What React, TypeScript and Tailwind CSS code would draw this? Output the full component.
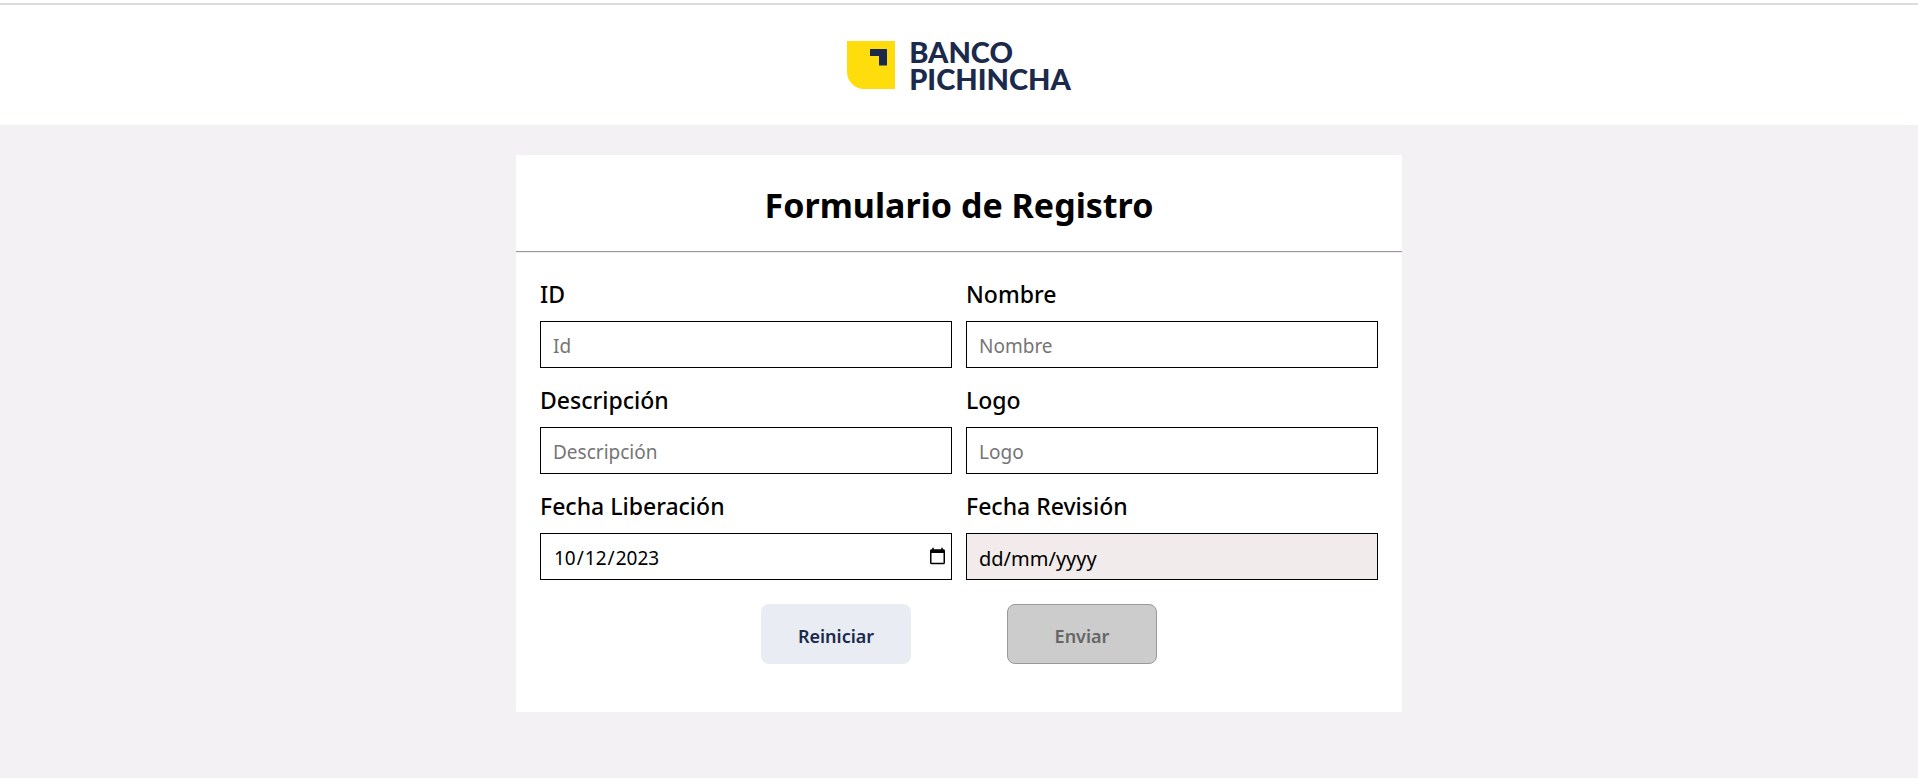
import { useState } from 'react';
import type { InputHTMLAttributes } from 'react';

type FieldProps = InputHTMLAttributes<HTMLInputElement> & { id: string; label: string };

const inputBase =
  'h-[47px] w-full rounded-none border border-black px-3 pt-[2px] text-[19px] text-black outline-none placeholder:text-[#757575]';

function Field({ id, label, className, ...rest }: FieldProps) {
  return (
    <div className="flex flex-col gap-[14px]">
      <label htmlFor={id} className="text-[23px] leading-[26px] font-medium">
        {label}
      </label>
      <input id={id} name={id} className={className ?? inputBase} {...rest} />
    </div>
  );
}

function BankLogo() {
  return (
    <div className="flex items-center gap-[14px] text-[#1b2a4b]">
      <svg viewBox="0 0 48 48" className="size-12" aria-hidden="true">
        <path d="M0 0H48V48H17A17 17 0 0 1 0 31Z" fill="#ffdd0c" />
        <path d="M23 8H40V24.500H32V15H23Z" fill="#1b2a4b" />
      </svg>
      <div className="font-['Lato'] text-[29px] leading-[27px] font-black">
        <div>BANCO</div>
        <div>PICHINCHA</div>
      </div>
    </div>
  );
}

export default function App() {
  const [release, setRelease] = useState('2023-10-12');

  return (
    <div className="min-h-screen bg-[#f3f1f3] font-['Noto_Sans',sans-serif] text-black">
      <div className="bg-white pt-[3px]">
        <header className="flex h-[122px] items-center justify-center border-t-2 border-[#dcdcdc]">
          <BankLogo />
        </header>
      </div>

      <main className="mx-auto mt-[30px] w-full max-w-[886px] bg-white pb-12">
        <h1 className="flex h-24 items-center justify-center pt-1 text-[34px] leading-none font-bold">
          Formulario de Registro
        </h1>
        <hr className="border-t border-b border-t-[#9a9a9a] border-b-[#eeeeee]" />

        <form className="px-6 pt-7" onSubmit={(e) => e.preventDefault()}>
          <div className="grid grid-cols-2 gap-x-[14px] gap-y-[19px]">
            <Field id="id" label="ID" placeholder="Id" />
            <Field id="nombre" label="Nombre" placeholder="Nombre" />
            <Field id="descripcion" label="Descripción" placeholder="Descripción" />
            <Field id="logo" label="Logo" placeholder="Logo" />
            <Field
              id="liberacion"
              label="Fecha Liberación"
              type="date"
              value={release}
              onChange={(e) => setRelease(e.target.value)}
              className="h-[47px] w-full rounded-none border border-black pt-1 pr-[2px] pl-3 text-[19px] text-black outline-none [&::-webkit-calendar-picker-indicator]:mb-1"
            />
            <Field
              id="revision"
              label="Fecha Revisión"
              placeholder="dd/mm/yyyy"
              readOnly
              className="h-[47px] w-full rounded-none border border-black bg-[#f2ebeb] px-3 pt-1 text-[20px] text-black outline-none placeholder:text-black"
            />
          </div>

          <div className="mt-6 flex justify-center gap-24">
            <button
              type="reset"
              className="h-[60px] w-[150px] rounded-lg bg-[#e9ecf3] pt-1 text-lg font-semibold text-[#1b2a4b]"
            >
              Reiniciar
            </button>
            <button
              type="submit"
              disabled
              className="h-[60px] w-[150px] rounded-lg border border-[#999999] bg-[#cccccc] pt-1 text-lg font-semibold text-[#666666]"
            >
              Enviar
            </button>
          </div>
        </form>
      </main>
    </div>
  );
}
